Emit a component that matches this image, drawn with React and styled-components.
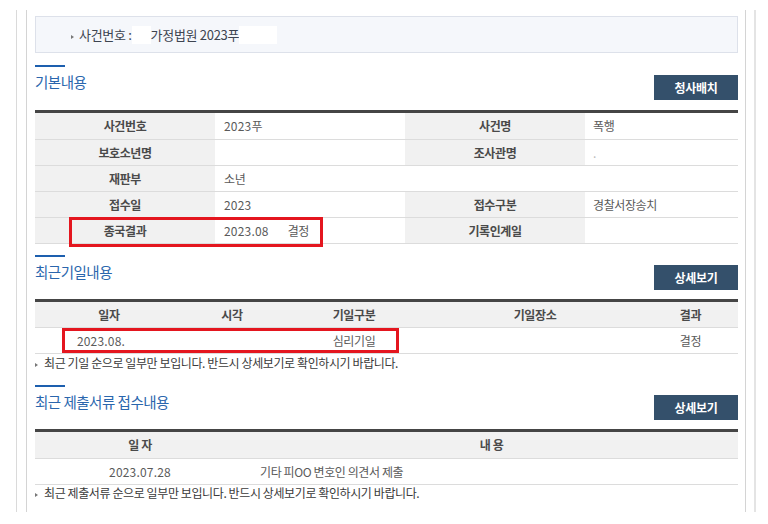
import React from 'react';
import styled, { createGlobalStyle } from 'styled-components';

const Global = createGlobalStyle`
  html, body { margin: 0; padding: 0; background: #fff; }
  body { font-family: "Noto Sans CJK KR", "Noto Sans", sans-serif; }
  * { box-sizing: border-box; }
`;

const Frame = styled.div`
  margin: 10px 12px 0 16px;
  height: 502px;
  border-left: 1px solid #dadada;
  border-right: 2px solid #e4e4e4;
  padding: 0 8px 0 9px;
`;

const Inner = styled.div`
  height: 100%;
  border-left: 1px solid #d4d4d4;
  border-right: 1px solid #d4d4d4;
  padding: 6px 7px 0 8px;
`;

const InfoBox = styled.div`
  height: 37px;
  border: 1px solid #dde1ea;
  background: #f5f7fb;
  display: flex;
  align-items: center;
  padding-left: 35px;
  font-size: 13px;
  letter-spacing: -0.3px;
  color: #3d4450;
`;

const Bullet = styled.span`
  display: inline-block;
  width: 0;
  height: 0;
  border-left: 3px solid #777;
  border-top: 2.5px solid transparent;
  border-bottom: 2.5px solid transparent;
  margin: 4px ${p => p.$gap || 5}px 0 0;
`;

const Blank = styled.span`
  display: inline-block;
  width: ${p => p.$w}px;
  height: ${p => p.$h || 18}px;
  background: #fff;
  vertical-align: middle;
`;

const Gap = styled.span`
  display: inline-block;
  width: ${p => p.$w}px;
`;

const Num = styled.span`
  letter-spacing: 0.2px;
`;

const Section = styled.section`
  margin-top: ${p => p.$mt}px;
`;

const Header = styled.div`
  display: flex;
  justify-content: space-between;
  align-items: flex-start;
  height: 36px;
`;

const TitleBlock = styled.div`
  display: flex;
  flex-direction: column;
`;

const Bar = styled.div`
  width: 30px;
  height: 2px;
  background: #1d5fae;
`;

const Title = styled.h2`
  margin: 5px 0 0;
  font-size: 14.5px;
  line-height: 20px;
  font-weight: normal;
  letter-spacing: -0.5px;
  color: #2a66ad;
`;

const Button = styled.button`
  margin-top: 10px;
  width: 84px;
  height: 25px;
  border: none;
  background: #34506b;
  color: #fff;
  font-family: inherit;
  font-size: 12px;
  font-weight: bold;
  letter-spacing: -0.3px;
  padding: 0;
`;

const TableWrap = styled.div`
  position: relative;
  margin-top: ${p => p.$mt}px;
  border-top: 3px solid #454545;
`;

const Table = styled.table`
  width: 100%;
  table-layout: fixed;
  border-collapse: collapse;
  font-size: 12px;
  letter-spacing: -0.4px;
`;

const Row = styled.tr`
  height: 26px;
`;

const Th = styled.th`
  padding: 0 8px;
  background: #f1f1f1;
  border-bottom: 1px solid #dcdcdc;
  color: #4a4a4a;
  font-weight: bold;
  text-align: center;
`;

const Td = styled.td`
  padding: ${p => (p.$pl != null ? `0 8px 0 ${p.$pl}px` : '0 8px')};
  border-bottom: 1px solid #dcdcdc;
  color: #5a5a5a;
  text-align: ${p => p.$align || 'left'};
  white-space: nowrap;
  overflow: hidden;
`;

const Dot = styled.span`
  color: #bbb;
`;

const RedBox = styled.div`
  position: absolute;
  left: ${p => p.$x}px;
  top: ${p => p.$y}px;
  width: ${p => p.$w}px;
  height: ${p => p.$h}px;
  border: 3px solid #e4161f;
  pointer-events: none;
`;

const Note = styled.p`
  margin: ${p => p.$mt}px 0 0;
  display: flex;
  align-items: center;
  font-size: 12px;
  line-height: 16px;
  letter-spacing: -0.4px;
  color: #3a3a3a;
`;

function SectionHead({ title, button }) {
  return (
    <Header>
      <TitleBlock>
        <Bar />
        <Title>{title}</Title>
      </TitleBlock>
      <Button>{button}</Button>
    </Header>
  );
}

export default function App() {
  return (
    <>
      <Global />
      <Frame>
        <Inner>
          <InfoBox>
            <Bullet $gap={5} />
            사건번호 :<Blank $w={19} />가정법원 2023푸<Blank $w={38} />
          </InfoBox>

          <Section $mt={12}>
            <SectionHead title="기본내용" button="청사배치" />
            <TableWrap $mt={9}>
              <Table>
                <colgroup>
                  <col style={{ width: 180 }} />
                  <col style={{ width: 190 }} />
                  <col style={{ width: 180 }} />
                  <col style={{ width: 153 }} />
                </colgroup>
                <tbody>
                  <Row>
                    <Th>사건번호</Th>
                    <Td $pl={9}><Num>2023</Num>푸</Td>
                    <Th>사건명</Th>
                    <Td>폭행</Td>
                  </Row>
                  <Row>
                    <Th>보호소년명</Th>
                    <Td $pl={9}></Td>
                    <Th>조사관명</Th>
                    <Td><Dot>.</Dot></Td>
                  </Row>
                  <Row>
                    <Th>재판부</Th>
                    <Td $pl={9} colSpan={3}>소년</Td>
                  </Row>
                  <Row>
                    <Th>접수일</Th>
                    <Td $pl={9}><Num>2023</Num></Td>
                    <Th>접수구분</Th>
                    <Td>경찰서장송치</Td>
                  </Row>
                  <Row>
                    <Th>종국결과</Th>
                    <Td $pl={9}><Num>2023.08</Num><Gap $w={19} />결정</Td>
                    <Th>기록인계일</Th>
                    <Td></Td>
                  </Row>
                </tbody>
              </Table>
              <RedBox $x={34} $y={104} $w={254} $h={30} />
            </TableWrap>
          </Section>

          <Section $mt={11}>
            <SectionHead title="최근기일내용" button="상세보기" />
            <TableWrap $mt={8}>
              <Table>
                <colgroup>
                  <col style={{ width: 148 }} />
                  <col style={{ width: 98 }} />
                  <col style={{ width: 146 }} />
                  <col style={{ width: 216 }} />
                  <col style={{ width: 95 }} />
                </colgroup>
                <thead>
                  <Row>
                    <Th>일자</Th>
                    <Th>시각</Th>
                    <Th>기일구분</Th>
                    <Th>기일장소</Th>
                    <Th>결과</Th>
                  </Row>
                </thead>
                <tbody>
                  <Row>
                    <Td $align="center"><Num>2023.08.</Num><Gap $w={16} /></Td>
                    <Td $align="center"></Td>
                    <Td $align="center">심리기일</Td>
                    <Td $align="center"></Td>
                    <Td $align="center">결정</Td>
                  </Row>
                </tbody>
              </Table>
              <RedBox $x={27} $y={26} $w={337} $h={25} />
            </TableWrap>
            <Note $mt={1}>
              <Bullet $gap={6} />
              최근 기일 순으로 일부만 보입니다. 반드시 상세보기로 확인하시기 바랍니다.
            </Note>
          </Section>

          <Section $mt={14}>
            <SectionHead title="최근 제출서류 접수내용" button="상세보기" />
            <TableWrap $mt={8}>
              <Table>
                <colgroup>
                  <col style={{ width: 210 }} />
                  <col style={{ width: 493 }} />
                </colgroup>
                <thead>
                  <Row>
                    <Th>일 자</Th>
                    <Th>내 용</Th>
                  </Row>
                </thead>
                <tbody>
                  <Row>
                    <Td $align="center"><Num>2023.07.28</Num></Td>
                    <Td $pl={15}>기타 피OO 변호인 의견서 제출</Td>
                  </Row>
                </tbody>
              </Table>
            </TableWrap>
            <Note $mt={0}>
              <Bullet $gap={6} />
              최근 제출서류 순으로 일부만 보입니다. 반드시 상세보기로 확인하시기 바랍니다.
            </Note>
          </Section>
        </Inner>
      </Frame>
    </>
  );
}
